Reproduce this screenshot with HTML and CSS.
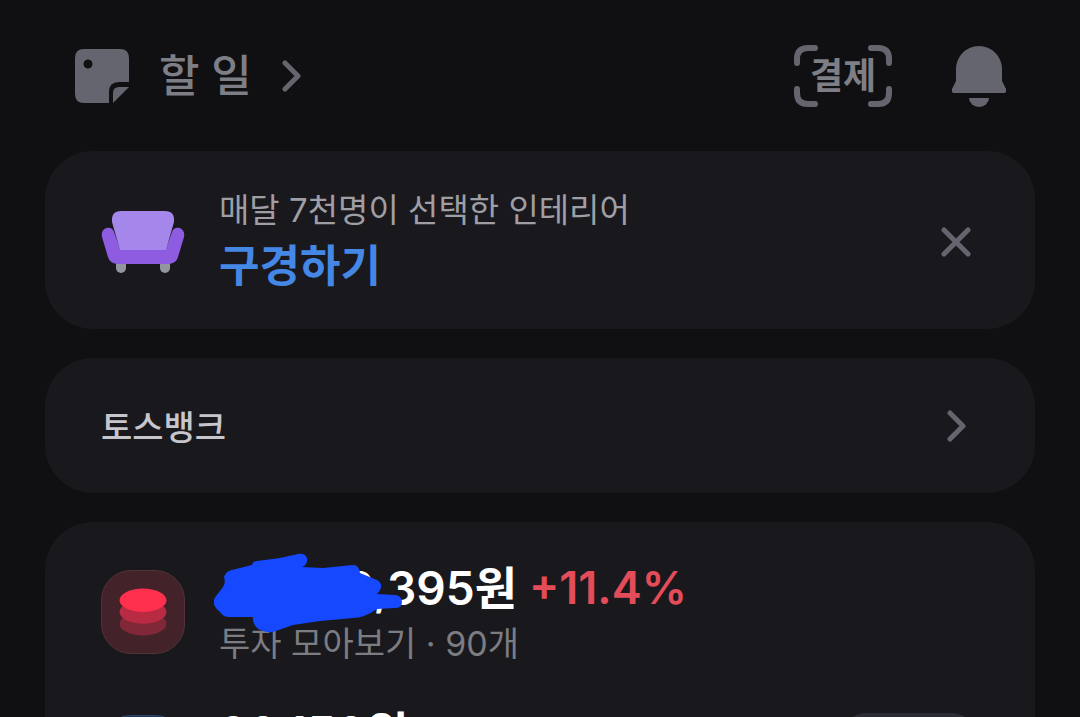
FILE: index.html
```
<!DOCTYPE html>
<html lang="ko">

<head>
    <meta charset="UTF-8">
    <meta name="viewport" content="width=device-width, initial-scale=1.0">
    <title>할 일</title>
    <link rel="stylesheet" href="styles.css">
</head>

<body>
<div class="app">
    <header class="topbar">
        <a class="todo" href="#todo">
            <svg class="note-icon" viewBox="0 0 54 54" aria-hidden="true">
                <path fill-rule="evenodd" d="M9 0H45Q54 0 54 9V33H44Q34 33 34 43V54H9Q0 54 0 45V9Q0 0 9 0ZM13 10.500a4.500 4.500 0 1 0 0 9a4.500 4.500 0 1 0 0-9Z"/>
                <path d="M54 38L38 54V44Q38 38 44 38Z"/>
            </svg>
            <span>할 일</span>
            <svg class="chevron" viewBox="0 0 20 32" aria-hidden="true"><path d="M3 3L16 16L3 29"/></svg>
        </a>
        <div class="actions">
            <button class="pay" type="button">
                <svg class="pay-frame" viewBox="0 0 98 62" aria-hidden="true">
                    <path d="M3 18V14Q3 3 14 3H21M77 3H84Q95 3 95 14V18M95 44V48Q95 59 84 59H77M21 59H14Q3 59 3 48V44"/>
                </svg>
                <span>결제</span>
            </button>
            <button class="bell" type="button" aria-label="알림">
                <svg viewBox="0 0 54 62" aria-hidden="true">
                    <path d="M4 24A23 23 0 0 1 50 24V36L54 44Q55 48 52 48H2Q-1 48 0 44L4 36Z"/>
                    <path d="M17 53H37A10 9 0 0 1 17 53Z"/>
                </svg>
            </button>
        </div>
    </header>

    <main class="cards">
        <section class="card banner">
            <svg class="sofa" viewBox="0 0 84 64" aria-hidden="true">
                <rect class="sofa-leg" x="15" y="48" width="10" height="15" rx="5"/>
                <rect class="sofa-leg" x="59" y="48" width="10" height="15" rx="5"/>
                <path class="sofa-base" d="M1 27C-1 17 11 15 13 22L19 39H65L71 22C73 15 85 17 83 27L77 47Q75 54 67 54H17Q9 54 7 47Z"/>
                <path class="sofa-back" d="M20 1H64Q74 1 73 12L65 40H19L11 12Q10 1 20 1Z"/>
            </svg>
            <div class="texts">
                <p class="sub light">매달 7천명이 선택한 인테리어</p>
                <a class="banner-link" href="#interior">구경하기</a>
            </div>
            <button class="close" type="button" aria-label="닫기">
                <svg viewBox="0 0 30 30" aria-hidden="true"><path d="M3 3L27 27M27 3L3 27"/></svg>
            </button>
        </section>

        <a class="card bank" href="#bank">
            <span>토스뱅크</span>
            <svg class="chevron" viewBox="0 0 20 32" aria-hidden="true"><path d="M3 3L16 16L3 29"/></svg>
        </a>

        <section class="card assets">
            <div class="asset">
                <div class="asset-icon invest">
                    <svg viewBox="0 0 84 84" aria-hidden="true">
                        <ellipse class="coin-low" cx="42" cy="54" rx="24" ry="12"/>
                        <ellipse class="coin-mid" cx="42" cy="42" rx="24" ry="12"/>
                        <ellipse class="coin-top" cx="42" cy="30" rx="24" ry="12"/>
                    </svg>
                </div>
                <div class="texts">
                    <p class="amount">
                        <span class="masked">0,395원
                            <svg class="scribble" viewBox="0 0 188 80" aria-hidden="true">
                                <path d="M2 43L9 34Q12 30 10 24Q12 18 18 17L38 12Q39 8 43 8L66 5L84 1Q91 0 93 5Q94 12 88 14L109 15L139 12Q145 12 146 20L163 27Q168 30 167 34Q167 37 163 41L181 42Q188 43 188 49Q188 55 181 55L163 56Q150 65 139 65L106 68L79 72L59 79Q50 80 43 75Q38 70 39 64H15Q9 64 6 59Q-4 51 2 43Z"/>
                            </svg>
                        </span>
                        <span class="rate">+11.4%</span>
                    </p>
                    <p class="sub wide">투자 모아보기 · 90개</p>
                </div>
            </div>
            <div class="asset">
                <div class="asset-icon account"></div>
                <div class="texts">
                    <p class="amount">20,150원</p>
                </div>
                <button class="send" type="button" aria-label="송금"></button>
            </div>
        </section>
    </main>
</div>
</body>

</html>
```
FILE: styles.css
```
* {
    box-sizing: border-box;
}

body {
    margin: 0;
    background-color: #101012;
    color: #fff;
    font-family: Inter, "Noto Sans CJK KR", sans-serif;
}

p {
    margin: 0;
}

a {
    color: inherit;
    text-decoration: none;
}

button {
    padding: 0;
    border: none;
    background: none;
    color: inherit;
    font-family: inherit;
    cursor: pointer;
}

svg {
    display: block;
}

.app {
    height: 100vh;
    overflow: hidden;
    padding: 0 45px;
}

.topbar {
    display: flex;
    align-items: center;
    justify-content: space-between;
    height: 151px;
    padding: 0 29px 0 30px;
}

.todo {
    display: flex;
    align-items: center;
    gap: 30px;
    color: #7e7e87;
    font-size: 44px;
    font-weight: 500;
    line-height: 56px;
}

.note-icon {
    width: 54px;
    height: 54px;
    fill: #656570;
}

.chevron {
    width: 20px;
    height: 32px;
    fill: none;
    stroke: #656570;
    stroke-width: 5;
    stroke-linecap: round;
    stroke-linejoin: round;
}

.actions {
    display: flex;
    align-items: center;
    gap: 60px;
}

.pay {
    display: grid;
    place-items: center;
    color: #7e7e87;
    font-size: 36px;
    font-weight: 700;
    line-height: 62px;
}

.pay > * {
    grid-area: 1 / 1;
}

.pay-frame {
    width: 98px;
    height: 62px;
    fill: none;
    stroke: #656570;
    stroke-width: 6;
    stroke-linecap: round;
}

.bell svg {
    width: 54px;
    height: 62px;
    fill: #656570;
}

.cards {
    display: flex;
    flex-direction: column;
    gap: 29px;
}

.card {
    border-radius: 48px;
    background-color: #19191d;
    padding: 0 56px;
}

.banner {
    display: flex;
    align-items: center;
    gap: 34px;
    min-height: 178px;
    padding-top: 3px;
}

.sofa {
    width: 84px;
    height: 64px;
}

.sofa-leg {
    fill: #92969f;
}

.sofa-base {
    fill: #8d5ce0;
}

.sofa-back {
    fill: #a587eb;
}

.texts {
    flex: 1;
}

.sub {
    color: #7c7c83;
    font-size: 33px;
    line-height: 48px;
}

.sub.light {
    color: #9e9ea4;
}

.sub.wide {
    font-size: 34px;
}

.banner-link {
    display: block;
    color: #4587e5;
    font-size: 44px;
    font-weight: 700;
    line-height: 64px;
}

.close {
    padding: 8px;
}

.close svg {
    width: 30px;
    height: 30px;
    stroke: #656570;
    stroke-width: 5;
    stroke-linecap: round;
}

.bank {
    display: flex;
    align-items: center;
    justify-content: space-between;
    min-height: 135px;
    padding-right: 68px;
    color: #c6c6cc;
    font-size: 34px;
    font-weight: 500;
}

.assets {
    display: flex;
    flex-direction: column;
    gap: 33px;
    padding-top: 34px;
}

.asset {
    display: flex;
    align-items: center;
    gap: 34px;
    min-height: 112px;
}

.asset .texts {
    align-self: flex-start;
}

.asset-icon {
    width: 84px;
    height: 84px;
    border: 1px solid #513238;
    border-radius: 30px;
}

.invest {
    background-color: #432329;
}

.account {
    border-color: #2d466f;
    background-color: #213355;
}

.coin-low {
    fill: #802837;
}

.coin-mid {
    fill: #b92b42;
}

.coin-top {
    fill: #ff304d;
}

.amount {
    display: flex;
    gap: 12px;
    font-size: 46px;
    font-weight: 600;
    line-height: 64px;
}

.masked {
    position: relative;
    min-width: 298px;
    text-align: right;
}

/* scribble hiding the leading digits */
.scribble {
    position: absolute;
    top: -3px;
    left: -5px;
    width: 188px;
    height: 80px;
    fill: #1548ff;
}

.rate {
    color: #e34c58;
    font-size: 45px;
}

.send {
    width: 140px;
    height: 88px;
    border-radius: 28px;
    background-color: #2c2c35;
}
```
